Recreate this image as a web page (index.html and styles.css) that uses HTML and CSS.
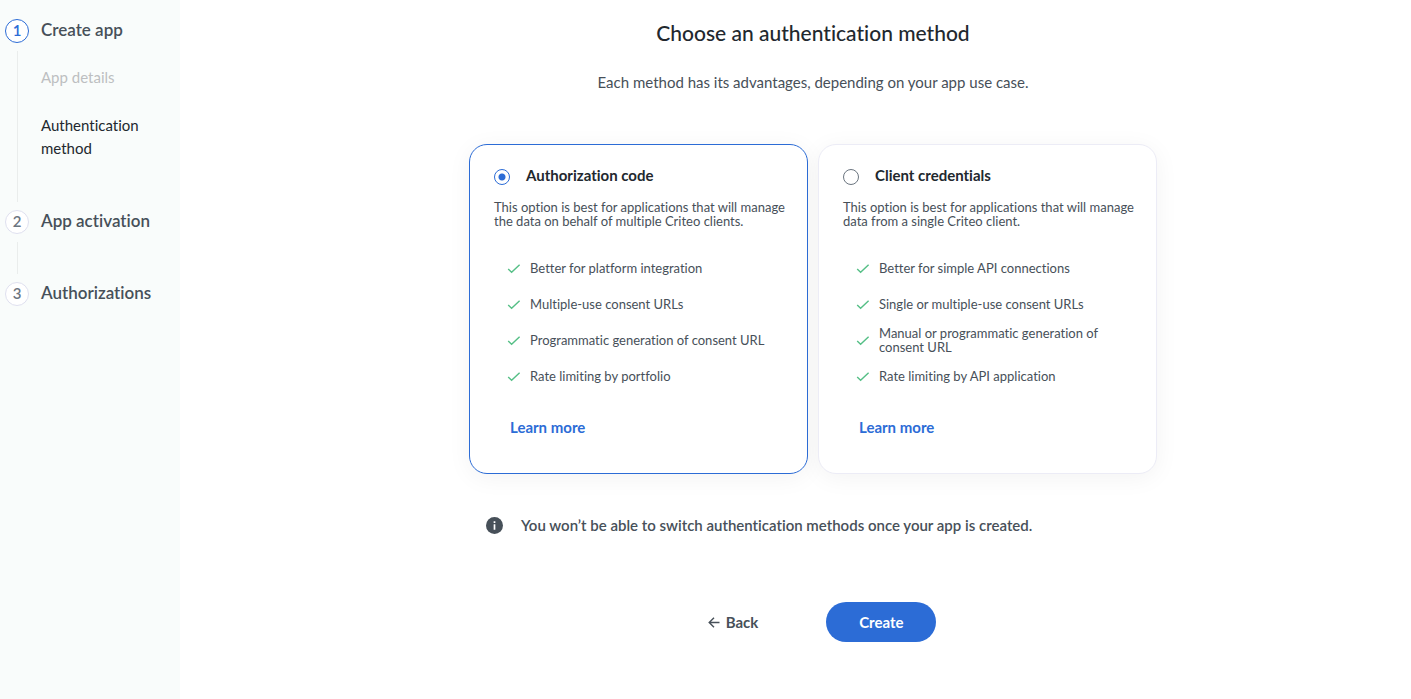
FILE: index.html
```html
<!DOCTYPE html>
<html lang="en">
<head>
<meta charset="utf-8">
<title>Choose an authentication method</title>
<link rel="stylesheet" href="styles.css">
</head>
<body>
<svg class="sprite" aria-hidden="true">
  <symbol id="check" viewBox="0 0 14 14"><path d="M1.2 8.1 4.6 11.3 12.6 3.7" fill="none" stroke="currentColor" stroke-width="1.4"/></symbol>
</svg>
<div class="layout">
  <nav class="sidebar" aria-label="Progress">
    <ol class="steps">
      <li class="step step-current">
        <span class="step-number">1</span>
        <span class="step-title">Create app</span>
        <span class="step-line"></span>
        <ul class="substeps">
          <li class="substep substep-done">App details</li>
          <li class="substep">Authentication method</li>
        </ul>
      </li>
      <li class="step">
        <span class="step-number">2</span>
        <span class="step-title">App activation</span>
        <span class="step-line"></span>
      </li>
      <li class="step">
        <span class="step-number">3</span>
        <span class="step-title">Authorizations</span>
      </li>
    </ol>
  </nav>
  <main class="main">
    <form class="content">
      <h1 class="title">Choose an authentication method</h1>
      <p class="subtitle">Each method has its advantages, depending on your app use case.</p>
      <div class="cards">
        <section class="card card-selected">
          <div class="card-head">
            <input class="radio" type="radio" name="method" id="code" checked>
            <label class="card-title" for="code">Authorization code</label>
          </div>
          <p class="card-text">This option is best for applications that will manage the data on behalf of multiple Criteo clients.</p>
          <ul class="features">
            <li class="feature"><svg class="check"><use href="#check"/></svg><span>Better for platform integration</span></li>
            <li class="feature"><svg class="check"><use href="#check"/></svg><span>Multiple-use consent URLs</span></li>
            <li class="feature"><svg class="check"><use href="#check"/></svg><span>Programmatic generation of consent URL</span></li>
            <li class="feature"><svg class="check"><use href="#check"/></svg><span>Rate limiting by portfolio</span></li>
          </ul>
          <a class="learn" href="#">Learn more</a>
        </section>
        <section class="card">
          <div class="card-head">
            <input class="radio" type="radio" name="method" id="credentials">
            <label class="card-title" for="credentials">Client credentials</label>
          </div>
          <p class="card-text">This option is best for applications that will manage data from a single Criteo client.</p>
          <ul class="features">
            <li class="feature"><svg class="check"><use href="#check"/></svg><span>Better for simple API connections</span></li>
            <li class="feature"><svg class="check"><use href="#check"/></svg><span>Single or multiple-use consent URLs</span></li>
            <li class="feature"><svg class="check"><use href="#check"/></svg><span>Manual or programmatic generation of consent URL</span></li>
            <li class="feature"><svg class="check"><use href="#check"/></svg><span>Rate limiting by API application</span></li>
          </ul>
          <a class="learn" href="#">Learn more</a>
        </section>
      </div>
      <p class="notice">
        <svg class="info" viewBox="0 0 16 16" aria-hidden="true"><circle cx="8" cy="8" r="8" fill="#475059"/><path d="M7.2 4h1.6v1.6H7.2zM7.2 6.8h1.6V12H7.2z" fill="#fff"/></svg>
        <span>You won’t be able to switch authentication methods once your app is created.</span>
      </p>
      <div class="actions">
        <button class="back" type="button"><svg class="arrow" viewBox="0 0 12 12" aria-hidden="true"><path d="M11.5 6.5H1.5M6 1.7 1.2 6.5 6 11.3" fill="none" stroke="currentColor" stroke-width="1.4"/></svg>Back</button>
        <button class="create" type="submit">Create</button>
      </div>
    </form>
  </main>
</div>
</body>
</html>
```
FILE: styles.css
```css
* { box-sizing: border-box; }
body { margin: 0; background: #fff; color: #475059; font-family: Lato, "Open Sans", sans-serif; font-variant-ligatures: none; }
h1, p, ul, ol { margin: 0; padding: 0; }
ul, ol { list-style: none; }
.sprite { display: none; }

.layout { display: flex; min-height: 100vh; }

.sidebar { flex: 0 0 180px; padding: 19px 5px; background: #f9fcfb; }
.steps { display: grid; gap: 8px; }
.step { display: grid; grid-template-columns: 24px 1fr; column-gap: 12px; row-gap: 8px; }
.step-number { height: 24px; border: 1px solid #dfe0ef; border-radius: 50%; background: #fff; color: #6b757f; font-size: 15px; font-weight: 600; line-height: 21px; text-align: center; }
.step-current .step-number { border-color: #2c6cd6; color: #2c6cd6; }
.step-title { font-size: 17px; font-weight: 600; line-height: 22px; }
.step-line { justify-self: center; width: 1px; min-height: 32px; background: #eaedec; }
.substeps { padding: 15px 0 42px; font-size: 15px; line-height: 23px; }
.substep { color: #22282e; }
.substep-done { margin-bottom: 25px; color: #bdbfc1; }

.main { flex: 1; padding: 19px 0 20px 35px; }
.content { width: 100%; max-width: 688px; margin: 0 auto; }
.title { color: #22282e; font-size: 21px; font-weight: 500; line-height: 28px; text-align: center; }
.subtitle { margin-top: 24px; font-size: 15px; line-height: 22px; text-align: center; }

.cards { display: grid; grid-template-columns: 1fr 1fr; gap: 10px; margin-top: 51px; }
.card { display: flex; flex-direction: column; align-items: flex-start; padding: 20px 18px 35px 24px; border: 1px solid #ececf6; border-radius: 18px; background: #fff; box-shadow: 0 4px 24px rgba(0, 0, 0, 0.05); }
.card-selected { border-color: #2c6cd6; }
.card-head { display: flex; align-items: center; gap: 16px; }
.radio { appearance: none; width: 16px; height: 16px; margin: 3px 0 0; border: 1px solid #6b757f; border-radius: 50%; background: #fff; }
.radio:checked { border-color: #2c6cd6; background: radial-gradient(circle, #2c6cd6 3px, #fff 4px); }
.card-title { color: #22282e; font-size: 15px; font-weight: 700; line-height: 20px; }
.card-text { margin-top: 15px; font-size: 13px; line-height: 14px; }
.features { margin-top: 22px; padding-left: 13px; }
.feature { display: flex; align-items: center; gap: 9px; height: 36px; font-size: 13px; line-height: 14px; }
.check { flex: none; width: 14px; height: 14px; color: #55bf86; }
.learn { margin: 22px 0 0 16px; color: #2c6cd6; font-size: 15px; font-weight: 700; line-height: 22px; text-decoration: none; }

.notice { display: flex; align-items: center; gap: 18px; margin-top: 40px; padding-left: 17px; font-size: 15px; font-weight: 600; line-height: 22px; }
.info { flex: none; width: 17px; height: 17px; }

.actions { display: flex; justify-content: center; gap: 36px; margin-top: 66px; padding-right: 14px; }
.actions button { height: 40px; padding: 0 32px; border: 0; border-radius: 20px; font-family: inherit; font-size: 15px; font-weight: 700; }
.back { display: flex; align-items: center; gap: 6px; background: transparent; color: #475059; }
.arrow { width: 12px; height: 12px; }
.actions .create { min-width: 110px; background: #2c6cd6; color: #fff; }
```
